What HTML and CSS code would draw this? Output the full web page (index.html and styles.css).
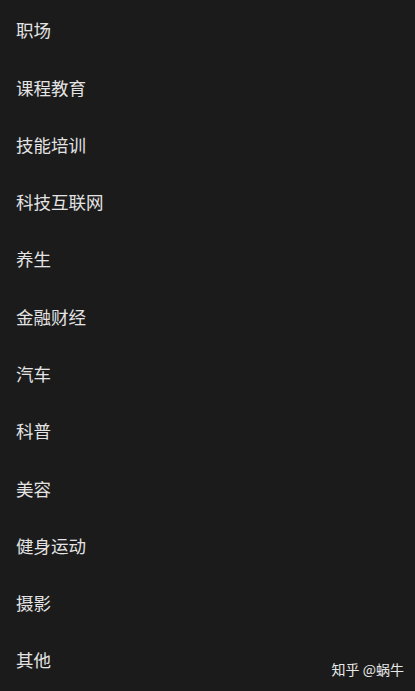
FILE: index.html
```html
<!DOCTYPE html>
<html lang="zh-CN">
<head>
<meta charset="utf-8">
<title>分类</title>
<link rel="stylesheet" href="styles.css">
</head>
<body>
<ul class="list">
  <li class="item">职场</li>
  <li class="item">课程教育</li>
  <li class="item">技能培训</li>
  <li class="item">科技互联网</li>
  <li class="item">养生</li>
  <li class="item">金融财经</li>
  <li class="item">汽车</li>
  <li class="item">科普</li>
  <li class="item">美容</li>
  <li class="item">健身运动</li>
  <li class="item">摄影</li>
  <li class="item">其他</li>
</ul>
<div class="watermark">知乎 @蜗牛</div>
</body>
</html>
```

FILE: styles.css
```css
html, body {
  margin: 0;
  padding: 0;
  background: #1b1b1b;
  height: 100%;
  overflow: hidden;
}
body {
  font-family: "Noto Sans CJK SC", "Noto Sans", sans-serif;
  color: #e4e4e4;
  position: relative;
}
.list {
  list-style: none;
  margin: 0;
  padding: 1.4px 0 0 0;
}
.item {
  height: 57.27px;
  line-height: 57.27px;
  padding-left: 16px;
  font-size: 17.5px;
}
.watermark {
  position: absolute;
  right: 11px;
  bottom: 12px;
  font-size: 14px;
  line-height: 20px;
  color: #e8e8e8;
}
```
